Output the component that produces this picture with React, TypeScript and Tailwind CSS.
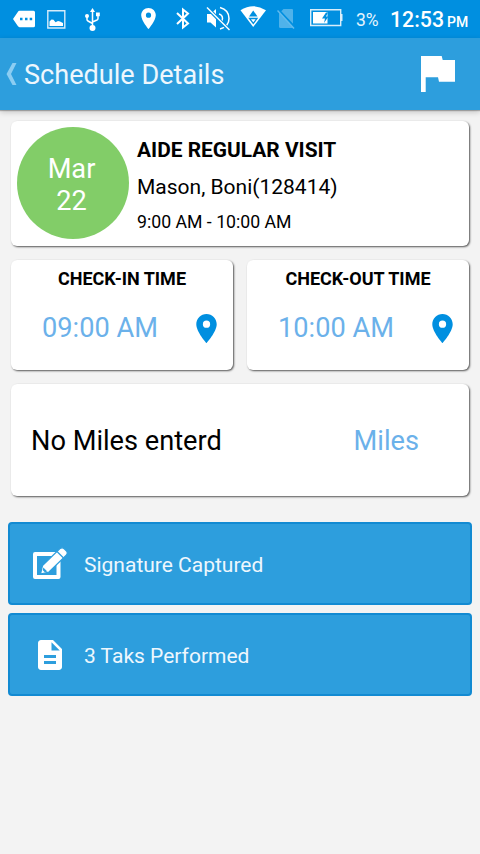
import React from 'react';
import { MdDescription, MdLocationOn } from 'react-icons/md';

type TimeCardProps = {
    title: string;
    time: string;
};

type ActionButtonProps = {
    label: string;
    icon: React.ReactNode;
};

const StatusBar: React.FC = () => {
    return (
        <div className="flex h-[38px] w-full bg-[#008fe0] text-white">
            {/* message */}
            <svg className="ml-[13px] h-[38px] w-[22px] shrink-0" viewBox="0 0 22 38" fill="currentColor">
                <path d="M6.500 10.700H20.500q1.500 0 1.500 1.500v13.500q0 1.500-1.500 1.500H6.500Q5.500 27 4.800 26L0 19l4.800-7Q5.500 10.700 6.500 10.700z" />
                <path fill="#008fe0" d="M7 17.700h2.500v2.500H7zM12 17.700h2.500v2.500H12zM16.700 17.700h2.500v2.500h-2.500z" />
            </svg>
            {/* picture */}
            <svg className="ml-3 h-[38px] w-[19px] shrink-0" viewBox="0 0 19 38">
                <path d="M.8 10.700h17v17.300H.800z" fill="none" stroke="#d5ecfa" strokeWidth="1.400" />
                <path d="M2.500 26v-4.500l2-2 2 .2 2 2.500 2.500-1.200 2 .5 3 1.500v3z" fill="currentColor" />
            </svg>
            {/* usb */}
            <svg className="ml-[19px] h-[38px] w-[16px] shrink-0" viewBox="0 0 16 38" fill="none" stroke="currentColor" strokeWidth="1.500">
                <path d="M7.500 11v17M2 16.500v3q0 1 1 1.500l4.500 2.500M13 16v2.500q0 1-1 1.500l-4.500 2" />
                <path d="M7.500 8l2.500 4H5zM11 12.500h3.800v3.800H11z" fill="currentColor" stroke="none" />
                <circle cx="2" cy="16" r="2" fill="currentColor" stroke="none" />
                <circle cx="7.500" cy="28" r="3" fill="currentColor" stroke="none" />
            </svg>
            {/* location */}
            <svg className="ml-[40px] h-[38px] w-[16px] shrink-0" viewBox="0 0 16 38" fill="currentColor">
                <path fillRule="evenodd" d="M7.500 8C3.400 8 .200 11.200.200 15.200.200 20.500 7.500 29 7.500 29s7.300-8.500 7.300-13.800C14.800 11.200 11.600 8 7.500 8zm0 9.800a2.600 2.600 0 1 1 0-5.200 2.600 2.600 0 0 1 0 5.200z" />
            </svg>
            {/* bluetooth */}
            <svg className="ml-[19px] h-[38px] w-[14px] shrink-0" viewBox="0 0 14 38" fill="none" stroke="currentColor" strokeWidth="2">
                <path d="M1 13l11 10.500-5 4V9.500l5 4L1 24" />
            </svg>
            {/* muted */}
            <svg className="ml-4 h-[38px] w-[25px] shrink-0" viewBox="0 0 25 38" fill="none" stroke="currentColor" strokeWidth="1.500">
                <path d="M1 14h3.500L10 9v18.500L4.500 22.500H1z" fill="currentColor" stroke="none" />
                <path d="M13 14q3.500 1 3.500 4.500 0 3-2.500 4.500" />
                <path d="M14 7.500q9 2.500 9 11 0 8-9 10.500" />
                <path d="M1.500 8L23 30" stroke="#008fe0" strokeWidth="3.500" />
                <path d="M1 7.500L23.500 30" />
            </svg>
            {/* wifi */}
            <svg className="ml-[9px] h-[38px] w-[27px] shrink-0" viewBox="0 0 27 38">
                <path d="M13.200 27L.500 10.300Q13.200 2 26 10.300z" fill="currentColor" />
                <path d="M13.200 10.500l4.300 6H9z" fill="#008fe0" />
                <path d="M9.500 18.500h7.500l-3.700 5z" fill="none" stroke="#008fe0" strokeWidth="1.300" />
            </svg>
            {/* no sim */}
            <svg className="ml-[10px] h-[38px] w-[20px] shrink-0" viewBox="0 0 20 38">
                <path d="M6.500 9H15q1 0 1 1v16.500q0 1.500-1 1.500H3.500Q2 28 2 26.500V13.500z" fill="#4fb2ea" />
                <path d="M1.500 10L18 27.500" stroke="#008fe0" strokeWidth="2.500" />
                <path d="M.500 10.500L17 28.500" stroke="#63bbed" strokeWidth="1.500" />
            </svg>
            {/* battery */}
            <svg className="ml-[13px] h-[38px] w-[33px] shrink-0" viewBox="0 0 33 38">
                <path d="M.700 9.700h30v15.800H.700z" fill="none" stroke="#d9eefb" strokeWidth="1.400" />
                <path d="M31 14h1.500v7H31z" fill="#d9eefb" />
                <path d="M3 12h14.500v11.500H3z" fill="currentColor" />
                <path d="M16 12.500l-4 6h3l-1 4.500 4.500-6.500h-2.500l2-4z" fill="#008fe0" />
            </svg>
            <span className="ml-[13px] w-[34px] pt-[7px] text-[17.500px] leading-[26px] text-[#e6f4fd]">3%</span>
            <span className="w-[57px] pt-[7px] text-[21.300px] leading-[26px] font-medium">12:53</span>
            <span className="pt-[9px] text-[14px] leading-[26px] font-medium">PM</span>
        </div>
    );
};

const Header: React.FC = () => {
    return (
        <header className="flex h-[72px] items-center bg-[#2d9edd] shadow-[0_1px_1px_rgba(0,0,0,0.250),0_2px_6px_rgba(0,0,0,0.2)]">
            <svg className="ml-[6px] h-[22px] w-[11px]" viewBox="0 0 11 22" fill="#8ccdf2">
                <path d="M6.500 0H10.500L5 11l5.500 11H6.500L.500 11z" />
            </svg>
            <h1 className="ml-[7px] pt-px text-[27.100px] leading-8 text-[#eef7fd]">Schedule Details</h1>
            <svg className="mr-[25px] ml-auto h-9 w-[34px]" viewBox="0 0 34 36" fill="#fff">
                <path d="M0 0h20.700l1 4H34v21.700H18l-1-4.400H4.700V36H0z" />
            </svg>
        </header>
    );
};

const TimeCard: React.FC<TimeCardProps> = ({ title, time }) => {
    return (
        <div className="h-[110px] flex-1 rounded-md bg-white shadow-[1px_1px_2px_rgba(0,0,0,0.650)]">
            <p className="pt-[7px] text-center text-[18px] leading-6 font-bold">{title}</p>
            <div className="mt-[18px] flex items-center pr-[9px] pl-[31px]">
                <span className="text-[27.200px] leading-[38px] text-[#6bb1ea]">{time}</span>
                <MdLocationOn className="ml-auto h-[35px] w-[35px] text-[#008fe0]" />
            </div>
        </div>
    );
};

const ActionButton: React.FC<ActionButtonProps> = ({ label, icon }) => {
    return (
        <button className="flex h-[83px] w-full items-center rounded-[4px] border-2 border-[#128ad2] bg-[#2d9edd] text-left">
            <span className="flex w-[74px] items-center pl-[22px]">{icon}</span>
            <span className="pt-[2px] text-[21px] leading-6 text-[#eef7fd]">{label}</span>
        </button>
    );
};

const App: React.FC = () => {
    return (
        <div className="min-h-[854px] w-[480px] bg-[#f3f3f3] font-['Roboto','Liberation_Sans',sans-serif] text-black">
            <StatusBar />
            <Header />
            <main>
                <div className="px-[11px] pt-[11px]">
                    <div className="flex h-[125px] rounded-md bg-white pl-[5.500px] shadow-[1px_1px_2px_rgba(0,0,0,0.650)]">
                        <div className="mt-[6px] flex h-[112px] w-[112px] flex-col items-center justify-center rounded-full bg-[#82cd68] pt-[3px] pr-[2px] text-[27.200px] leading-8 text-white">
                            <span>Mar</span>
                            <span>22</span>
                        </div>
                        <div className="pt-[16px] pl-[8.500px]">
                            <p className="text-[20.900px] leading-[26px] font-bold">AIDE REGULAR VISIT</p>
                            <p className="mt-[11px] text-[21px] leading-[26px]">Mason, Boni(128414)</p>
                            <p className="mt-[10px] text-[17.700px] leading-6">9:00 AM - 10:00 AM</p>
                        </div>
                    </div>
                    <div className="mt-[14px] flex gap-[14px]">
                        <TimeCard title="CHECK-IN TIME" time="09:00 AM" />
                        <TimeCard title="CHECK-OUT TIME" time="10:00 AM" />
                    </div>
                    <div className="mt-[14px] flex h-[112px] items-center justify-between rounded-md bg-white pt-[2px] pr-[50px] pl-5 text-[27.200px] shadow-[1px_1px_2px_rgba(0,0,0,0.650)]">
                        <span>No Miles enterd</span>
                        <span className="text-[#6bb1ea]">Miles</span>
                    </div>
                </div>
                <div className="mt-[26px] flex flex-col gap-2 px-2">
                    <ActionButton
                        label="Signature Captured"
                        icon={
                            <svg className="h-[34px] w-9" viewBox="0 0 36 34">
                                <path d="M3 7h23.500v23H3z" fill="none" stroke="#fff" strokeWidth="4" strokeLinejoin="round" />
                                <path d="M8.500 27l2-8.500L28 1.500q2.500-1.500 4.500.5l2 2q1.500 2 0 4L17 25z" fill="#fff" stroke="#2d9edd" strokeWidth="1.200" />
                                <path d="M25 4.500l6.500 6.500" stroke="#2d9edd" strokeWidth="1.200" />
                                <path d="M11.300 20.500l4 4-2.500.7-2-2z" fill="#2d9edd" />
                            </svg>
                        }
                    />
                    <ActionButton
                        label="3 Taks Performed"
                        icon={<MdDescription className="h-9 w-9 text-white" />}
                    />
                </div>
            </main>
        </div>
    );
};

export default App;
